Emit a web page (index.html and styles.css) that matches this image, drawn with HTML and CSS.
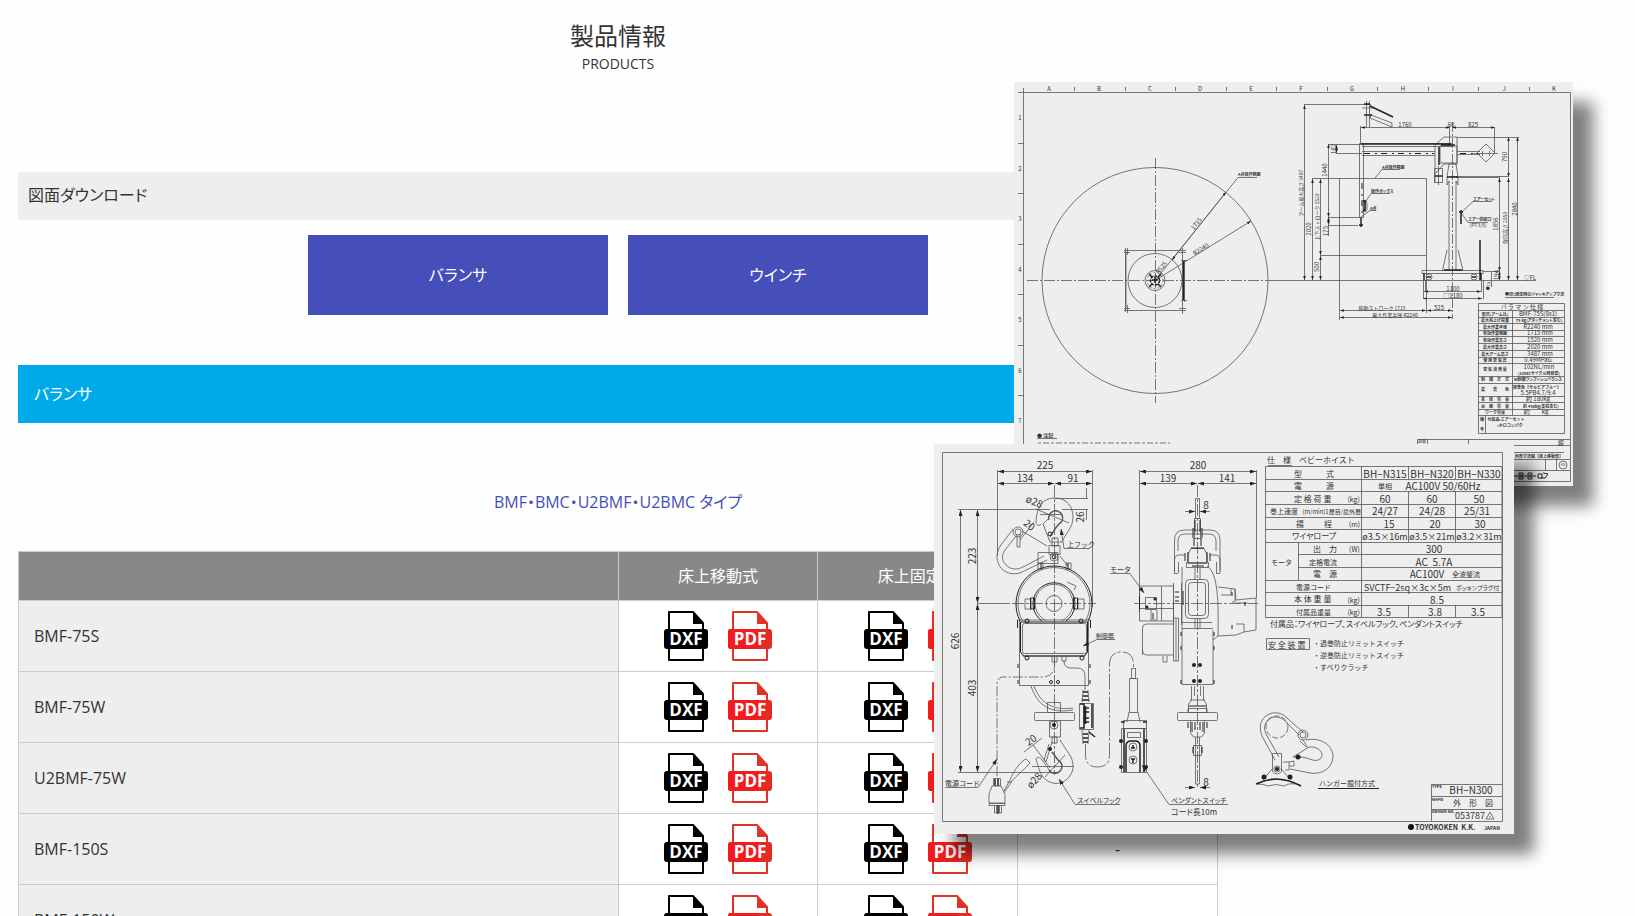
FILE: index.html
```html
<!DOCTYPE html>
<html lang="ja">
<head>
<meta charset="utf-8">
<title>製品情報</title>
<link rel="stylesheet" href="styles.css">
</head>
<body>
<svg class="defs" aria-hidden="true">
  <defs>
    <symbol id="dxf" viewBox="0 0 44 50">
      <path d="M5 1H29L39 12V49H5Z" fill="#fff" stroke="#000" stroke-width="2" stroke-linejoin="round"/>
      <path d="M29 1L39 12V13H29Z" fill="#000"/>
      <rect y="18" width="44" height="20" rx="3" fill="#000"/>
      <text class="file-label" x="22" y="34">DXF</text>
    </symbol>
    <symbol id="pdf" viewBox="0 0 44 50">
      <path d="M5 1H29L39 12V49H5Z" fill="#fff" stroke="#e13428" stroke-width="2" stroke-linejoin="round"/>
      <path d="M29 1L39 12V13H29Z" fill="#e13428"/>
      <rect y="18" width="44" height="20" rx="3" fill="#e62b24"/>
      <path d="M3 18H31V38H3A3 3 0 0 1 0 35V21A3 3 0 0 1 3 18Z" fill="#f41b1e"/>
      <text class="file-label" x="22" y="34">PDF</text>
    </symbol>
    <marker id="arrow" viewBox="0 0 6 4" refX="6" refY="2" markerWidth="6" markerHeight="4" orient="auto-start-reverse" markerUnits="userSpaceOnUse"><path d="M0 0L6 2L0 4Z" fill="#222"/></marker>
    <marker id="tip" viewBox="0 0 6 4" refX="6" refY="2" markerWidth="4" markerHeight="3" orient="auto-start-reverse" markerUnits="userSpaceOnUse"><path d="M0 0L6 2L0 4Z" fill="#222"/></marker>
  </defs>
</svg>

<main class="page">
  <header class="page-head">
    <h1>製品情報</h1>
    <p>PRODUCTS</p>
  </header>
  <h2 class="bar">図面ダウンロード</h2>
  <nav class="jump">
    <a href="#balancer">バランサ</a>
    <a href="#winch">ウインチ</a>
  </nav>
  <h3 class="section" id="balancer">バランサ</h3>
  <h4 class="type">BMF・BMC・U2BMF・U2BMC タイプ</h4>
  <table class="files">
    <thead>
      <tr><th class="name"></th><th>床上移動式</th><th>床上固定式</th><th></th></tr>
    </thead>
    <tbody>
      <tr><th>BMF-75S</th>
        <td><a href="#"><svg><use href="#dxf"/></svg></a><a href="#"><svg><use href="#pdf"/></svg></a></td>
        <td><a href="#"><svg><use href="#dxf"/></svg></a><a href="#"><svg><use href="#pdf"/></svg></a></td><td></td></tr>
      <tr><th>BMF-75W</th>
        <td><a href="#"><svg><use href="#dxf"/></svg></a><a href="#"><svg><use href="#pdf"/></svg></a></td>
        <td><a href="#"><svg><use href="#dxf"/></svg></a><a href="#"><svg><use href="#pdf"/></svg></a></td><td></td></tr>
      <tr><th>U2BMF-75W</th>
        <td><a href="#"><svg><use href="#dxf"/></svg></a><a href="#"><svg><use href="#pdf"/></svg></a></td>
        <td><a href="#"><svg><use href="#dxf"/></svg></a><a href="#"><svg><use href="#pdf"/></svg></a></td><td></td></tr>
      <tr><th>BMF-150S</th>
        <td><a href="#"><svg><use href="#dxf"/></svg></a><a href="#"><svg><use href="#pdf"/></svg></a></td>
        <td><a href="#"><svg><use href="#dxf"/></svg></a><a href="#"><svg><use href="#pdf"/></svg></a></td><td>-</td></tr>
      <tr><th>BMF-150W</th>
        <td><a href="#"><svg><use href="#dxf"/></svg></a><a href="#"><svg><use href="#pdf"/></svg></a></td>
        <td><a href="#"><svg><use href="#dxf"/></svg></a><a href="#"><svg><use href="#pdf"/></svg></a></td><td></td></tr>
    </tbody>
  </table>
</main>

<figure class="sheet sheet-crane">
<svg viewBox="1014 82 559 404">
  <!-- sheet frame and grid marks -->
  <path class="frame" d="M1018 92.500H1570.500V481.500H1023.500V88M1074.500 87v4M1125.500 87v4M1175.500 87v4M1226.500 87v4M1276.500 87v4M1327.500 87v4M1377.500 87v4M1428.500 87v4M1478.500 87v4M1529.500 87v4M1018 143.500h5M1018 193.500h5M1018 244.500h5M1018 294.500h5M1018 345.500h5M1018 395.500h5"/>
  <g class="t6 mid"><text x="1049" y="91">A</text><text x="1099" y="91">B</text><text x="1150" y="91">C</text><text x="1200" y="91">D</text><text x="1251" y="91">E</text><text x="1301" y="91">F</text><text x="1352" y="91">G</text><text x="1403" y="91">H</text><text x="1453" y="91">I</text><text x="1504" y="91">J</text><text x="1554" y="91">K</text>
  <text x="1020" y="120">1</text><text x="1020" y="171">2</text><text x="1020" y="221">3</text><text x="1020" y="272">4</text><text x="1020" y="322">5</text><text x="1020" y="373">6</text><text x="1020" y="423">7</text></g>
  <!-- plan view -->
  <g class="ln">
    <circle cx="1155" cy="280.500" r="113"/><circle cx="1155" cy="280.500" r="27"/><circle cx="1155" cy="280.500" r="10"/><circle cx="1155" cy="280.500" r="8" stroke-dasharray="2 2"/>
    <path d="M1124 250.500H1186M1126 308.500V252M1125.500 248V312M1124 310.500H1186M1182.500 248V314M1184.500 260V302"/>
    <path d="M1127.500 248v7M1124 252.500h6M1124 308.500h6M1127.500 305v8M1179 252.500h7M1179 308.500h7M1181 260.500h6M1181 300.500h6"/>
    <path d="M1155.500 158V403" stroke-dasharray="11 2 2 2"/><path d="M1027 280.500H1270" stroke-dasharray="11 2 2 2"/>
    <path d="M1155 280.500L1238 177.500H1257"/><path d="M1155 280.500L1251 221" marker-end="url(#tip)"/>
    <path d="M1172 260L1226 192" marker-end="url(#tip)" marker-start="url(#tip)"/>
  </g>
  <g class="bold"><circle cx="1155" cy="280.500" r="4.500" stroke-dasharray="3 1"/><path d="M1183.500 261V300M1149 274l3 3M1161 274l-3 3M1149 287l3-3M1161 287l-3-3M1152 280h6M1155 277v6"/></g>
  <g class="t6 mid"><text transform="translate(1198 225) rotate(-51)">1715</text><text transform="translate(1202 251) rotate(-32)">R2240</text><text transform="translate(1163 269) rotate(-51)">R525</text></g>
  <text class="t4 strong" x="1238" y="176">A点操作範囲</text>
  <text class="t5 strong" x="1037" y="437">● 注記</text><path class="ln" d="M1037 438.500h20"/><path class="ln" d="M1038 443h132" stroke-dasharray="3 2 6 2"/>

  <!-- elevation dimensions -->
  <g class="ln dim">
    <path d="M1304.500 105V280"/><path d="M1312.500 179V280"/><path d="M1320.500 179V255"/><path d="M1320.500 256V280"/><path d="M1328.500 144V217"/><path d="M1328.500 217V225"/>
    <path d="M1361 127.500H1450"/><path d="M1452 127.500H1495"/><path d="M1508.500 137V177"/><path d="M1508.500 178V280"/><path d="M1517.500 137V280"/><path d="M1499.500 178V271"/><path d="M1499.500 271V280"/>
    <path d="M1424 291.500H1481"/><path d="M1423 298.500H1482"/><path d="M1340 310.500H1426"/><path d="M1427 310.500H1452"/><path d="M1340 317.500H1452"/><path d="M1336.500 145V153"/>
  </g>
  <g class="ln">
    <path d="M1304 104.500H1371M1312 178.500H1426.500V313M1339.500 178V320M1320 255.500H1426M1328 144.500H1362M1336 153.500H1362M1328 217.500H1362M1328 225.500H1358M1328.500 225v11M1360.500 126V144M1494.500 127V153M1457 137.500H1519M1450 176.500H1509M1456 177.500H1500M1483 271.500H1500M1270 280.500H1536M1449.500 126v20M1423.500 280v19M1425.500 280v12M1481.500 280v12M1483.500 280v19M1491.500 272v15"/>
    <path d="M1452.500 122V319" stroke-dasharray="10 2 2 2"/>
    <path d="M1362 143.500H1452M1362 146.500H1452M1362 151.500H1435M1362 155.500H1435M1457 151.500H1480M1457 154.500H1480M1359.500 143.500h4v74h-4zM1366.500 101v26M1369.500 101v26M1362 108h11"/>
    <path d="M1477 153L1486 144L1495 153L1486 162ZM1474 153.500h24M1482.500 151v5M1489.500 151v5"/>
    <path d="M1435 183V145L1444 137H1457V164H1444L1435 174M1440 146h17v17h-17zM1434.500 168.500h8v14h-8zM1438.500 166v19"/>
    <path d="M1449 164h7l2 13v8l-2 -4V270M1449 164l-2 13v8l2 -4V270M1447 250L1442.500 270.500H1463L1458 250M1422 270.500H1483V273.500H1422Z"/>
    <circle cx="1429" cy="277" r="3"/><circle cx="1474" cy="277" r="3"/><path d="M1363 200.500h3l1 3v6l-1 2h-3zM1365 201v10"/>
    <path d="M1400 169.500H1382L1375 178M1390 193.500H1371L1364 204M1376 210.500H1370L1361 217M1492 201.500H1473L1462 212M1488 222.500H1468L1462 214"/>
    <path d="M1371 115l21 8v4l-22 -9z"/>
  </g>
  <path class="bold" d="M1361 144h90M1370 106l23 11M1364 104h6M1364 115h8M1439 147v18M1447 177h11M1480 240v40M1424 273v7M1481 273v7M1361 218v9M1359 225h4M1459 212h4M1461 210v14M1435 176h8M1427 277h4M1472 277h4M1363 201h2v9h-2M1441 145h14M1444 270h18"/>
  <path class="bold thin" d="M1364 153.500H1434M1460 153.500H1478M1362 183V215" stroke-dasharray="6 5 2 4"/>
  <g class="t6 mid"><text x="1405" y="127">1760</text><text x="1451" y="127">60</text><text x="1473" y="127">825</text><text x="1453" y="291">1100</text><text x="1453" y="298">□1180</text><text x="1439" y="310">525</text><text x="1530" y="280">▽FL</text>
  <text transform="translate(1311 229) rotate(-90)">2020</text><text transform="translate(1319 267) rotate(-90)">500</text><text transform="translate(1327 170) rotate(-90)">1440</text><text transform="translate(1328 231) rotate(-90)">175</text><text transform="translate(1336 149) rotate(-90)">182</text><text transform="translate(1507 157) rotate(-90)">790</text><text transform="translate(1517 209) rotate(-90)">2840</text><text transform="translate(1498 224) rotate(-90)">1856</text><text transform="translate(1499 275) rotate(-90)">194</text></g>
  <g class="t5 mid"><text transform="translate(1303 193) rotate(-90)">アーム最大高さ 3487</text><text transform="translate(1319 217) rotate(-90)">上下ストローク 1520</text><text transform="translate(1507 228) rotate(-90)">旋回高さ 2050</text><text class="t4" transform="translate(1490 286) rotate(-90)">●15</text><text x="1382" y="310">移動ストローク 1715</text><text x="1395" y="317">最大作業半径 R2240</text><text x="1478" y="227">(PT3/8)</text></g>
  <g class="t4 strong palt"><text x="1382" y="169">A点操作範囲</text><text x="1371" y="193">操作ボックス</text><text x="1370" y="210">A点</text><text x="1473" y="201">エアーセット</text><text x="1468" y="221">エアー供給口</text><text x="1505" y="296">●印=固定時のジャッキアップ寸法</text></g><path class="ln" d="M1505 297.500h49"/>

  <!-- specification table -->
  <path class="ln" d="M1478.500 303.500H1564.500V433.500H1478.500ZM1478 310.500h86M1478 317.500h86M1478 323.500h86M1478 330.500h86M1478 336.500h86M1478 343.500h86M1478 350.500h86M1478 357.500h86M1478 363.500h86M1478 376.500h86M1478 383.500h86M1478 396.500h86M1478 402.500h86M1478 409.500h86M1478 415.500h86M1512.500 310V415M1485.500 415V433"/>
  <text class="t6 mid" x="1522" y="309">バ ラ マ ン 仕 様</text>
  <g class="t4 mid strong"><text x="1495" y="316">型式(アーム比)</text><text x="1495" y="322">最大吊上げ荷重</text><text x="1495" y="329">最大作業半径</text><text x="1495" y="335">有効作業範囲</text><text x="1495" y="342">有効作業高さ</text><text x="1495" y="349">最大作業高さ</text><text x="1495" y="356">最大アーム高さ</text><text x="1495" y="362">使 用 空 気 圧</text><text x="1495" y="371">空 気 消 費 量</text><text x="1495" y="381">制　御　方　式</text><text x="1495" y="391">塗　　装　　色</text><text x="1495" y="401">本　体　質　量</text><text x="1495" y="408">台　座　質　量</text><text x="1495" y="414">ワーク質量</text><text x="1482" y="421">備</text><text x="1482" y="431">考</text></g>
  <g class="t6 mid"><text x="1538" y="316">BMF-75S(8x1)</text><text x="1538" y="329">R2240 mm</text><text x="1540" y="335">1715 mm</text><text x="1540" y="342">1520 mm</text><text x="1540" y="349">2020 mm</text><text x="1540" y="356">3487 mm</text><text x="1538" y="362">0.49MPaG</text><text x="1539" y="369">102NL/min</text><text x="1538" y="395">5.5PB4.7/9.4</text><text x="1538" y="401">約 180kg</text><text x="1536" y="414">約　　kg</text></g>
  <g class="t4 mid strong"><text x="1539" y="322" class="palt">75 kg(アタッチメント含む)</text><text x="1539" y="375">(10secサイクル時目安)</text><text x="1538" y="381" class="palt">W制御ワンプッシュバランス</text><text x="1537" y="389">標準色【サルビアブルー】</text><text x="1541" y="408">約 450kg(支柱含む)</text><text x="1506" y="421">付属品:エアーセット</text><text x="1510" y="427">:ホロコンパク</text></g>
  <path class="ln" d="M1417.500 445V439.500H1570M1427.500 439v6M1468.500 439v6M1500 445.500h70M1500 452.500h64M1500 459.500h70M1500 470.500h70M1545.500 459v11M1556.500 459v11"/>
  <circle class="ln" cx="1563" cy="465" r="4"/><text class="t4 mid" x="1563" y="466">A3</text><text class="t6 mid" x="1561" y="445">殿</text><text class="t4 strong" x="1515" y="458">外形寸法図【床上移動型】</text><text class="t4" x="1418" y="443">図番</text>
  <path class="bold thin" d="M1514 476h4M1519 473h4v6h-4zM1524 476h3M1528 473h4v6h-4zM1533 476h3M1538 474h4v4h-4zM1543 473l5 1-3 4h-4M1520 475h2v2h-2zM1529 475h2v2h-2z"/>
</svg>
</figure>

<figure class="sheet sheet-hoist">
<svg viewBox="934 444 580 390">
  <path class="frame" d="M942.500 452.500H1502.500V821.500H942.500Z"/>
  <!-- dimensions -->
  <g class="ln dim"><path d="M998 471.500H1092"/><path d="M998 483.500H1054"/><path d="M1055 483.500H1092"/><path d="M1140 471.500H1256"/><path d="M1140 483.500H1197"/><path d="M1198 483.500H1256"/><path d="M977.500 510V603"/><path d="M977.500 604V772"/><path d="M960.500 510V772"/></g>
  <g class="ln">
    <path d="M997.500 470V556M1092.500 470V607M1139.500 470V612M1256.500 470V598M958 509.500H1050M977 603.500H1010M958 772.500H1058M1055 498.500H1088M1062 509.500H1088M1086.500 488v10M1086.500 510v10"/>
    <path d="M1054.500 485V775M1197.500 485V788M1012 603.500H1096M1134 603.500H1258" stroke-dasharray="12 2 3 2"/>
  </g>
  <g class="num mid"><text x="1045" y="469">225</text><text x="1025" y="482">134</text><text x="1073" y="482">91</text><text x="1198" y="469">280</text><text x="1168" y="482">139</text><text x="1227" y="482">141</text><text x="1206" y="509">8</text><text x="1206" y="786">8</text>
  <text transform="translate(976 556) rotate(-90)">223</text><text transform="translate(959 641) rotate(-90)">626</text><text transform="translate(976 688) rotate(-90)">403</text><text transform="translate(1084 517) rotate(-90)">26</text><text transform="translate(1033 505) rotate(22)">ø28</text><text transform="translate(1027 528) rotate(38)">20</text><text transform="translate(1033 743) rotate(-35)">20</text><text transform="translate(1037 783) rotate(-48)">ø28</text></g>

  <!-- front view: upper hook, shackle -->
  <g class="ln">
    <path d="M1041 524C1039 527 1036 525 1036 521C1037 507 1042 498 1055 498C1067 498 1073 507 1073 517C1073 528 1065 534 1062 542H1050L1043 524L1049 518"/>
    <path d="M1049 520a7 7 0 1 1 10 4C1054 529 1052 535 1050 536" stroke-width="1.500"/>
    <path d="M1036 509L1069 523M1034 522L1020 540M1022 531L1047 546M1040 514.500H1062M1052 538h6v8h-6zM1049 545.500h11v9h-11zM1038 552.500h20v11h-20z"/>
    <circle cx="1054" cy="557" r="4"/><circle cx="1018" cy="532" r="5"/><circle cx="1018" cy="532" r="3"/><path d="M1017 534v13h3v-13M1013 529L1001 545C995 554 996 562 1002 569C1008 575 1018 575 1024 571L1047 560M1016 536L1005 550C1001 556 1002 561 1006 565C1011 570 1017 570 1023 567L1044 556M1060 556L1068 566"/>
    <path d="M1090 548.500H1064L1061 529" marker-end="url(#arrow)"/>
    <path d="M1022.500 621A36 36 0 1 1 1085.500 621"/><circle cx="1054" cy="603.500" r="8"/><path d="M1046 620.500A19 19 0 1 1 1062 620.500"/>
    <path d="M1025 599h6v10h-6zM1078 599h6v10h-6zM1038 563h5v6h-5zM1066 563h5v6h-5zM1067 582l9 4-2 4M1018 620h72M1019.500 621V685.500H1088.500V621"/>
    <rect x="1022.500" y="623.500" width="64" height="30" rx="2"/><path d="M1023 656h62"/>
    <path d="M1115 639.500H1097L1083 646" marker-end="url(#arrow)"/>
  </g>
  <g class="bold thin"><path d="M1020 621A38 38 0 1 1 1088 621"/><path d="M1042 621A21 21 0 1 1 1066 621"/><circle cx="1054" cy="557" r="2"/><circle cx="1050" cy="534" r="2"/><path d="M1020.500 622v30l3 4h61l3-4V622zM1030.500 598h4v11h-4zM1073.500 598h4v11h-4zM1017.500 620v8M1090.500 620v8M1018 664v4M1090 664v4M1018 680v4M1090 680v4M1041 563v6M1068 563v6"/><circle cx="1051" cy="682" r="1.500"/><circle cx="1058" cy="682" r="1.500"/><circle cx="1027" cy="658" r="2"/><circle cx="1082" cy="658" r="2"/><circle cx="1027" cy="621" r="2"/><circle cx="1081" cy="621" r="2"/></g>
  <!-- front view: lower hook, power cord -->
  <g class="ln">
    <path d="M1054.500 656V664q0 13 -12 13H1003q-6 0 -6 8V778" stroke-dasharray="10 2 2 2"/>
    <path d="M1052 656v6h5v-6M1062 656v5h4v-5M1064 661q0 7 7 7h6q8 0 8 8v14M1031 686C1037 705 1050 714 1073 710M1034 686C1040 703 1053 711 1073 708M1047.500 702.500h13v10h-13zM1049.500 721v16h11v-16z"/>
    <rect x="1034.500" y="712.500" width="40" height="8" rx="1"/><circle cx="1054" cy="725" r="4"/>
    <path d="M1052 737h5v6h-5zM1060 740L1071 757C1074 764 1074 771 1069 777C1062 786 1050 785 1043 777C1039 772 1037 762 1036 759C1037 756 1040 757 1042 760L1050 771M1049 744L1044 760L1050 768M1052 742l-6 20M1032 766.500H1074M1024 752L1042 738M1033 745L1046 762M1045 777L1065 755" />
    <path d="M1049 770a7 7 0 1 0 9 -10L1052 752" stroke-width="1.500"/>
    <path d="M1120 804.500H1075L1059 779" marker-end="url(#arrow)"/><path d="M945 787.500H978L997 759" marker-end="url(#arrow)"/>
    <path d="M993.500 778.500h7v7h-7zM992 786h9l4 8v9h-16v-9zM989 803.500h16v2h-16zM994.500 806v7h2v-7M999.500 806v7h2v-7M1004 791L1010 780C1014 770 1021 761 1026 759L1030 763C1026 768 1017 775 1012 781L1004 793M1007 782h5"/>
    <!-- cable to pendant -->
    <path d="M1085.500 744V755q0 12 12 12q12 0 12 -12V665q0 -13 12 -13q12 0 12 13V668" stroke-dasharray="16 2 3 2"/>
    <path d="M1079.500 703.500h14v26h-14zM1083 690l-1 12M1088 690l1 12M1083 744l-1 -14M1088 744l1 -14"/>
    <path d="M1131.500 668.500h4v10h-4zM1129.500 678.500h8v34h-8zM1129 712L1127 722M1138 712L1140 722M1123.500 720.500h23v8h-23zM1121.500 728.500h25v44h-25zM1127.500 732.500h13v5h-13z"/>
    <circle cx="1133" cy="747" r="4"/><circle cx="1133" cy="760" r="4"/>
    <path d="M1228 804.500H1169L1142 765" marker-end="url(#arrow)"/>
  </g>
  <path class="bold" d="M995 779v6M998 779v6M998 805v9M1083 692h5M1083 696h5M1082 700h7M1083 734h5M1083 738h5M1083 742h5M1080 704h4v24h-4M1092 704v24M1083 708h6M1083 712h6M1083 718h6M1083 722h6M1089 732l6 5M1126 772V746q0 -5 5 -5h4q5 0 5 5V772M1124 729V772M1144 729V772M1131 748h4M1133 745v3M1131 759h4M1133 759v4M1121 722h4M1143 722h4M1085.500 706v18"/>
  <g class="dots"><circle cx="1121" cy="741" r="2"/><circle cx="1146" cy="741" r="2"/><circle cx="1121" cy="767" r="2"/><circle cx="1146" cy="767" r="2"/><circle cx="1050" cy="749" r="2"/><circle cx="1054" cy="725" r="2"/></g>

  <!-- side view -->
  <g class="ln">
    <path d="M1195.500 498.500h4v20h-4zM1194.500 518.500h6v20h-6zM1174.500 571V540q0 -10 10 -10H1210q10 0 10 10V571M1178 551V541q0 -7 7 -7H1209q7 0 7 7V551M1174.500 573V560q0 -5 5 -5h5M1220 573V560q0 -5 -5 -5h-5M1178.500 573V562M1216.500 573V562M1174 573.500h4M1216 573.500h4M1191 548.500h13l3 6v9h-19v-9zM1186.500 562.500h22v5h-22z"/>
    <path d="M1182 567V684.500H1213V630M1207 566C1216 572 1219 590 1218 636L1213 640M1139.500 586h34v35h-34zM1145.500 597.500h11v12h-11zM1151 610v10h6v-10M1161.500 586v35M1173.500 583v42M1181.500 583v42M1139 608.500H1173"/>
    <rect x="1185.500" y="579.500" width="23" height="39" rx="4"/><rect x="1188.500" y="582.500" width="17" height="33" rx="3"/>
    <path d="M1195 568v12M1200 568v12M1195 619v9M1200 619v9M1182 628.500H1213M1182 622.500H1212M1218 587L1235 589V602H1232M1235 589L1236 600L1256 598V630L1244 632L1236 635L1218 636M1236 624h8v8M1231 589v6h-10M1236 603h12M1142.500 655V628q0 -4 4 -4H1173M1142.500 650q0 5 5 5H1173M1163 656v6h4v-6M1173.500 618h5v43h-5zM1176 618v43"/>
    <path d="M1191.500 686v14l-3 4v8M1203.500 686v14l3 4v8M1194.500 686v10M1200.500 686v10M1190 700h15M1188 708.500h19v4h-19z"/>
    <rect x="1177.500" y="712.500" width="40" height="8" rx="1"/>
    <path d="M1190.500 721v12l3 4h8l3 -4v-12M1195.500 737v47h4v-47M1193.500 745.500h8v10h-8zM1110 573.500H1130"/>
    <path d="M1130 573.500L1144 593" marker-end="url(#arrow)"/>
    <path d="M1185 511.500H1195" marker-end="url(#arrow)"/><path d="M1210 511.500H1200" marker-end="url(#arrow)"/><path d="M1185 787.500H1195" marker-end="url(#arrow)"/><path d="M1210 787.500H1200" marker-end="url(#arrow)"/>
  </g>
  <path class="bold thin" d="M1193 528v10M1202 528v10M1195 520v12M1200 520v12M1188 552v10M1207 552v10M1185 553v8M1210 553v8M1191 548h13M1194 538v8M1201 538v8M1192 566h12M1183 591v14M1175 592h4M1175 597h4M1175 601h4M1153 613v6M1192 722v10M1203 722v10M1195 722v8M1200 722v8M1193 747v6M1202 747v6M1188 722v6M1207 722v6M1181 632v4M1214 632v4M1181 646v4M1214 646v4M1181 680v4M1214 680v4M1232 592v4M1232 625v4M1245 602v4M1139.500 596V610M1189 706h17"/>
  <g class="dots"><circle cx="1194" cy="665" r="2"/><circle cx="1200" cy="665" r="2"/><circle cx="1194" cy="681" r="2"/><circle cx="1200" cy="681" r="2"/><circle cx="1147" cy="607" r="1.500"/><circle cx="1155" cy="599" r="1.500"/></g>

  <!-- hanger detail -->
  <g class="ln">
    <path d="M1275 760L1262 736C1258 726 1261 718 1269 714C1277 711 1284 714 1288 719L1303 732M1279 757L1266 734C1263 727 1265 722 1270 718C1276 716 1281 717 1285 721L1299 735"/>
    <circle cx="1277" cy="727" r="11" stroke-dasharray="6 2"/><circle cx="1303" cy="735" r="5"/><circle cx="1303" cy="735" r="3"/>
    <path d="M1306 740C1320 737 1332 744 1333 756C1333 768 1322 775 1310 773L1290 769M1309 747C1320 746 1325 755 1320 759C1314 764 1305 754 1296 758M1309 747L1293 757L1301 757M1303 740l5 8M1300 741l6 6M1272.500 753.500h9v18q-4 5 -9 0zM1283 762h6v8h-4M1289 762l5 -1v5h-5M1272 769L1263 780M1281 769L1291 780"/>
    <path d="M1257 784Q1277 774 1300 785Q1290 782 1284 786Q1276 783 1268 786Q1264 784 1257 784"/>
    <circle cx="1277" cy="769" r="3"/>
  </g>
  <path class="bold" d="M1256 784Q1277 773 1301 786"/><path class="bold thin" d="M1318 788.500h61"/><g class="dots"><circle cx="1264" cy="777" r="2.500"/><circle cx="1290" cy="777" r="2.500"/><circle cx="1298" cy="757" r="2.500"/><circle cx="1277" cy="769" r="2"/></g>

  <!-- labels -->
  <g class="t7"><text x="1067" y="547">上フック</text><text x="1096" y="638" class="t6">制御器</text><text x="1110" y="572">モータ</text><text x="945" y="786">電源コード</text><text x="1077" y="803" class="palt">スイベルフック</text><text x="1171" y="803" class="palt">ペンダントスイッチ</text><text x="1171" y="815" class="t8 palt">コード長10m</text><text x="1319" y="786">ハンガー掘付方式</text></g>

  <!-- specification table -->
  <path class="ln" d="M1265.500 466.500H1502V617.500H1265.500ZM1265 479.500h237M1265 491.500h237M1265 504.500h237M1265 517.500h237M1265 529.500h237M1265 542.500h237M1298 554.500h204M1298 567.500h204M1265 580.500h237M1265 592.500h237M1265 605.500h237M1361.500 466V617M1298.500 542V580M1408.500 466v13M1455.500 466v13M1408.500 491v51M1455.500 491v51M1408.500 605v12M1455.500 605v12M1268 465.500h24"/>
  <g class="t8"><text x="1267" y="463">仕　様　ベビーホイスト</text><text x="1294" y="477">型</text><text x="1326" y="477">式</text><text x="1294" y="489">電</text><text x="1326" y="489">源</text><text x="1294" y="502">定 格 荷 重</text><text x="1296" y="527">揚</text><text x="1324" y="527">程</text><text x="1292" y="539" class="palt">ワイヤロープ</text><text x="1271" y="565" class="t7">モータ</text><text x="1313" y="552">出　力</text><text x="1309" y="565" class="t7">定格電流</text><text x="1313" y="577">電　源</text><text x="1296" y="590" class="t7">電源コード</text><text x="1294" y="602">本 体 重 量</text><text x="1296" y="615" class="t7">付属品重量</text></g>
  <g class="t7 end"><text x="1360" y="502">(kg)</text><text x="1360" y="527">(m)</text><text x="1360" y="552">(W)</text><text x="1360" y="603">(kg)</text><text x="1360" y="615">(kg)</text></g>
  <text class="t7" x="1270" y="514">巻上速度</text><text class="t6 end palt" x="1361" y="514">(m/min)1層目/最外層</text>
  <g class="num mid"><text x="1385" y="478">BH−N315</text><text x="1432" y="478">BH−N320</text><text x="1479" y="478">BH−N330</text><text x="1443" y="490">AC100V 50/60Hz</text><text x="1385" y="503">60</text><text x="1432" y="503">60</text><text x="1479" y="503">50</text><text x="1385" y="515">24/27</text><text x="1432" y="515">24/28</text><text x="1477" y="515">25/31</text><text x="1389" y="528">15</text><text x="1435" y="528">20</text><text x="1480" y="528">30</text><text x="1434" y="553">300</text><text x="1434" y="566">AC&#160; 5.7A</text><text x="1427" y="578">AC100V</text><text x="1437" y="604">8.5</text><text x="1384" y="616">3.5</text><text x="1435" y="616">3.8</text><text x="1478" y="616">3.5</text></g>
  <g class="num9 mid"><text x="1385" y="540">ø3.5×16m</text><text x="1432" y="540">ø3.5×21m</text><text x="1479" y="540">ø3.2×31m</text></g>
  <text class="num9" x="1364" y="591">SVCTF−2sq×3c×5m</text>
  <g class="t7"><text x="1378" y="489">単相</text><text x="1452" y="577">全波整流</text><text x="1456" y="590" class="t6 palt">ポッキンプラグ付</text></g>
  <g class="t7"><text x="1270" y="627" class="t8 palt">付属品：ワイヤロープ、スイベルフック、ペンダントスイッチ</text><text x="1268" y="648" class="t8">安 全 装 置</text><text x="1313" y="646">・過巻防止リミットスイッチ</text><text x="1313" y="658">・逆巻防止リミットスイッチ</text><text x="1313" y="670">・すべりクラッチ</text></g>
  <path class="ln" d="M1266.500 638.500h43v11h-43zM1431.500 821V784.500H1502M1431 796.500h71M1431 809.500h71"/>
  <g class="t4 strong"><text x="1432" y="788">TYPE</text><text x="1432" y="801">NAME</text><text x="1432" y="813">DRAWN No.</text></g>
  <text class="num mid" x="1471" y="794">BH−N300</text><text class="t8 mid" x="1473" y="806">外　形　図</text><text class="num9 mid" x="1470" y="819">053787</text><path class="ln" d="M1486 819l4 -7l4 7zM1489 817h2"/>
  <circle cx="1411" cy="827" r="3" fill="#111"/><text class="brand" x="1415" y="830">TOYOKOKEN&#160; K.K.</text><text class="brand small" x="1484" y="830">JAPAN</text>
</svg>
</figure>
</body>
</html>
```
FILE: styles.css
```css
* { box-sizing: border-box; }
html { overflow: hidden; }
body {
  margin: 0;
  position: relative;
  height: 100vh;
  overflow: hidden;
  background: #fefefe;
  color: #333;
  font: 16px/24px "Open Sans", "Noto Sans CJK JP", sans-serif;
}
.defs { position: absolute; width: 0; height: 0; }
.page { max-width: 1236px; padding: 18px; }
h1, h2, h3, h4, p, figure { margin: 0; font-weight: 400; }
.page-head { text-align: center; height: 154px; }
.page-head h1 { font-size: 24px; line-height: 36px; }
.page-head p { font-size: 14px; line-height: 20px; }
.bar {
  padding: 11px 10px 13px;
  background: #eee;
  font-size: 16px;
  font-feature-settings: "palt";
}
.jump { display: flex; justify-content: center; gap: 20px; padding: 15px 0 50px; }
.jump a {
  flex: 0 1 300px;
  padding: 28px 0;
  background: #464eba;
  color: #fff;
  text-align: center;
  text-decoration: none;
  font-feature-settings: "palt";
}
.section {
  padding: 17px 16px;
  background: #00aae9;
  color: #fff;
  font-size: 16px;
  font-feature-settings: "palt";
}
.type {
  padding: 67px 0 37px;
  color: #464eba;
  font-size: 16px;
  text-align: center;
  font-feature-settings: "palt";
}
.files { width: 100%; border-collapse: collapse; table-layout: fixed; }
.files th, .files td { border: 1px solid #ccc; font-weight: 400; }
.files thead th { height: 49px; padding: 0; background: #888; color: #fff; }
.files thead .name { width: 50%; }
.files tbody th { padding: 0 15px; background: #eee; text-align: left; }
.files tbody td { height: 71px; padding: 0; background: #fff; text-align: center; }
.files a { display: inline-block; margin: 0 10px; vertical-align: middle; color: inherit; }
.files svg { display: block; width: 44px; height: 50px; }
.file-label { font: bold 17px "Open Sans", sans-serif; fill: #fff; text-anchor: middle; }

.sheet { position: absolute; background: #eee; box-shadow: 20px 20px 15px rgba(0, 0, 0, .5); }
.sheet svg { display: block; width: 100%; }
.sheet-crane { left: 1014px; top: 82px; width: 559px; }
.sheet-hoist { left: 934px; top: 444px; width: 580px; }
.sheet text { font-family: "Noto Sans CJK JP", sans-serif; fill: #333; }
.frame { fill: none; stroke: #777; }
.ln { fill: none; stroke: #555; stroke-width: .8; }
.bold { fill: none; stroke: #222; stroke-width: 1.5; }
.bold.thin { stroke-width: 1; }
.dots { fill: #222; }
.dim path { marker-start: url(#arrow); marker-end: url(#arrow); }
.sheet-crane .dim path { marker-start: url(#tip); marker-end: url(#tip); }
.mid { text-anchor: middle; }
.end { text-anchor: end; }
.palt { font-feature-settings: "palt"; }
.strong { font-weight: 700; }
.t4 { font-size: 4px; }
.t5 { font-size: 5px; }
.t6 { font-size: 6px; }
.t7 { font-size: 7px; }
.t8 { font-size: 8px; }
.num { font-size: 10px; }
.num9 { font-size: 9px; }
.brand { font-size: 7px; font-weight: 700; }
.small { font-size: 5px; }
```
